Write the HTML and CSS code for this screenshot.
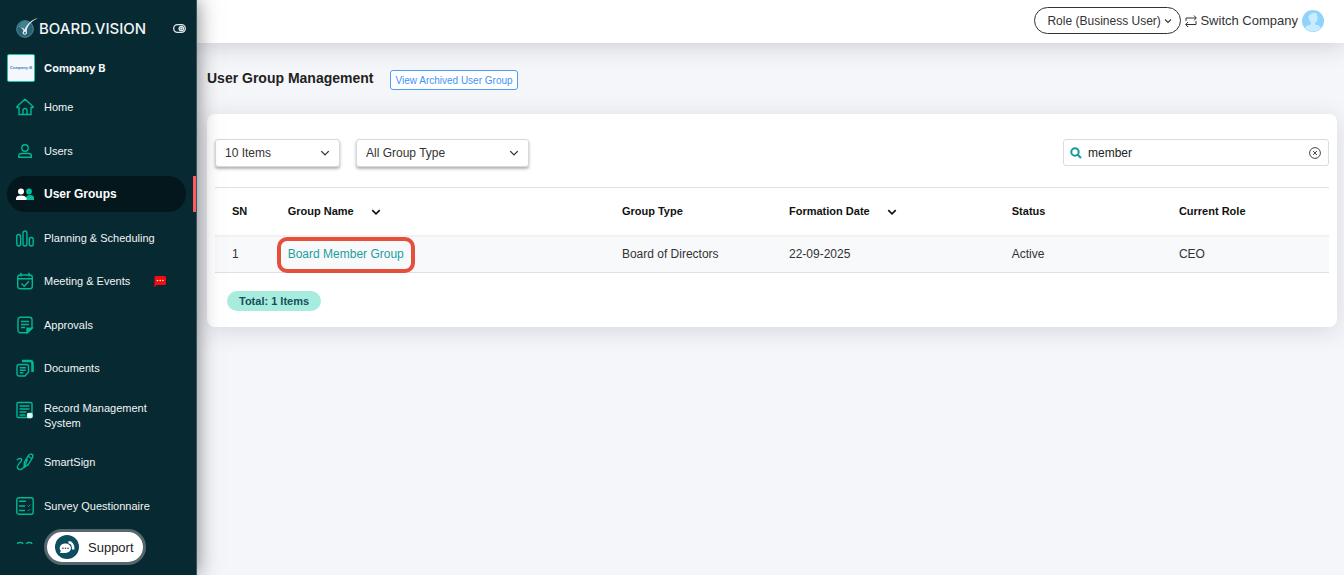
FILE: index.html
```html
<!DOCTYPE html>
<html lang="en">
<head>
    <meta charset="utf-8">
    <meta name="viewport" content="width=device-width, initial-scale=1">
    <title>User Group Management</title>
    <link rel="stylesheet" href="styles.css">
</head>
<body>
    <aside class="sidebar">
        <div class="brand">
            <svg class="brand-mark" viewBox="0 0 24 22" width="24" height="22">
                <circle cx="10" cy="12" r="8.300" fill="#286473" stroke="#4d8c98"/>
                <path d="M3 10a8 8 0 0 1 11-5L9 12z" fill="#4c8f9c" opacity=".7"/>
                <path d="M5.500 10.500q3 0 4 2C12 7 16 3 23 1c-6 3-9 6-11 11-.5 2 0 3 0 4a2.300 2.300 0 0 1-4.500 0c0-1 1-2 1-2.500q-1-2-3-3z" fill="#e6f0f1"/>
                <circle cx="9.800" cy="15.800" r="1" fill="#286473"/>
            </svg>
            <span class="brand-name">BOARD.VISION</span>
            <button class="toggle" aria-label="Collapse menu">
                <svg viewBox="0 0 13 9" width="13" height="9" fill="none" stroke="#e3e9ea" stroke-width="1.300">
                    <rect x=".7" y=".7" width="11.600" height="7.600" rx="3.800"/>
                    <circle cx="8.300" cy="4.500" r="2.200"/>
                    <circle cx="8.300" cy="4.500" r=".6"/>
                </svg>
            </button>
        </div>
        <div class="company">
            <span class="company-logo">Company B</span>
            <span class="company-name">Company B</span>
        </div>

        <nav class="nav">
            <a class="nav-item" href="#">
                <svg class="icon" viewBox="0 0 18 18"><path d="M1 8.500L9 1.200l8 7.300v1h-2v7H3v-7H1zM7 16.500v-4a2 2 0 0 1 4 0v4"/></svg>
                <span>Home</span>
            </a>
            <a class="nav-item" href="#">
                <svg class="icon" viewBox="0 0 18 18"><circle cx="9" cy="6" r="3.200"/><path d="M2.700 15.300v-1.300a2.500 2.500 0 0 1 2.500-2.500h7.600a2.500 2.500 0 0 1 2.500 2.500v1.300z"/></svg>
                <span>Users</span>
            </a>
            <a class="nav-item active" href="#">
                <svg class="icon" viewBox="0 0 18 18"><g stroke="none"><circle cx="13" cy="6.500" r="2.900" fill="#00c1a0"/><path d="M10 15v-2q0-3 4-3 4 0 4 3v2z" fill="#00c1a0"/><circle cx="5" cy="6.500" r="3" fill="#fff"/><path d="M0 15v-1.500q0-3 5-3t5.500 3V15z" fill="#fff"/></g></svg>
                <span>User Groups</span>
            </a>
            <a class="nav-item" href="#">
                <svg class="icon" viewBox="0 0 18 18"><rect x=".8" y="5.500" width="3.800" height="11.500" rx="1.900"/><rect x="7" y="2" width="3.900" height="15" rx="1.900"/><rect x="13.300" y="8.500" width="3.900" height="8.500" rx="1.900"/></svg>
                <span>Planning &amp; Scheduling</span>
            </a>
            <a class="nav-item" href="#">
                <svg class="icon" viewBox="0 0 18 18"><rect x="1.700" y="3" width="14.600" height="13.800" rx="2.500"/><path d="M2 6.800h14M5 .8v3.700M13 .8v3.700M5.500 11.500l2.700 2.700 4.800-5"/></svg>
                <span>Meeting &amp; Events</span>
                <svg class="alert" viewBox="0 0 12 11" width="12" height="11"><path d="M1.500 0h9q1.500 0 1.500 1.500v6Q12 9 10.500 9H3l-3 2 .5-3V1.500Q.5 0 1.500 0z" fill="#f00d0d"/><g fill="#fff"><circle cx="3.500" cy="4.500" r=".8"/><circle cx="6.200" cy="4.500" r=".8"/><circle cx="8.900" cy="4.500" r=".8"/></g></svg>
            </a>
            <a class="nav-item" href="#">
                <svg class="icon" viewBox="0 0 18 18"><path d="M4.500 1.300h9a2.500 2.500 0 0 1 2.500 2.500v8.500l-4.500 4.500h-7A2.500 2.500 0 0 1 2 14.300V3.800a2.500 2.500 0 0 1 2.500-2.500zM5 5.500h8M5 8.500h8M5 11.500h4"/><path d="M11 16.500v-4.300h5z" fill="#00b796"/></svg>
                <span>Approvals</span>
            </a>
            <a class="nav-item" href="#">
                <svg class="icon" viewBox="0 0 18 18"><path d="M3 5.500h7.500a2 2 0 0 1 2 2V13l-3.500 4H3a2 2 0 0 1-2-2V7.500a2 2 0 0 1 2-2zM3.800 8.700h6M3.800 11.200h6M3.800 13.700h3.500"/><path d="M6 2h8q2.500 0 2.500 2.500V13" stroke-width="2.600"/></svg>
                <span>Documents</span>
            </a>
            <a class="nav-item tall" href="#">
                <svg class="icon" viewBox="0 0 18 18"><rect x="1" y="1.500" width="15" height="15" rx="1"/><path d="M3.500 5h10M3.500 8h10M3.500 11h7M3.500 14h6"/><rect x="11.500" y="12.500" width="4.500" height="4" rx="1" fill="#fff" stroke="#b9fbe9"/></svg>
                <span>Record Management System</span>
            </a>
            <a class="nav-item" href="#">
                <svg class="icon" viewBox="0 0 18 18"><path d="M.8 7C3 5 6.500 5 5.500 7.500 4.500 10 .5 12 1.500 15c.7 2 3.500 2 5 .5 1-1 2-1.500 2.500-.5M8 14l.5-5 4-6.500q2-2.500 4-.5.8 1.500-.3 3.200L12 12zM12.500 3.500l3 2M11.500 6l-3 7.500M15 .8l2.300 1.500"/></svg>
                <span>SmartSign</span>
            </a>
            <a class="nav-item" href="#">
                <svg class="icon" viewBox="0 0 18 18"><rect x=".8" y=".8" width="16.400" height="16.400" rx="2"/><path d="M3 4.300h7M3 9h6M3 13.500h6"/><path d="M11.500 8.500l1 1 2-2M11.500 13l1 1 2-2" stroke-width=".8"/></svg>
                <span>Survey Questionnaire</span>
            </a>
            <a class="nav-item" href="#" aria-label="More">
                <svg class="icon" viewBox="0 0 18 18"><rect x="1.500" y="2.500" width="5.500" height="6" rx="2"/><rect x="10.500" y="2.500" width="5.500" height="6" rx="2"/></svg>
            </a>
        </nav>

        <button class="support">
            <svg viewBox="0 0 24 24" width="24" height="24">
                <circle cx="12" cy="12" r="12" fill="#0d4d60"/>
                <path d="M13.500 6q6 0 6 8.500h-2.500q0-6-3.500-6z" fill="#fff"/>
                <path d="M10.500 8.500a5.200 4.500 0 0 1 0 9.500H5l.8-2A5.200 4.700 0 0 1 10.500 8.500z" fill="#fff"/>
                <g fill="#0d4d60"><circle cx="8" cy="13.300" r=".8"/><circle cx="10.500" cy="13.300" r=".8"/><circle cx="13" cy="13.300" r=".8"/></g>
            </svg>
            Support
        </button>
    </aside>

    <div class="page">
        <header class="topbar">
            <div class="select-box role">
                <select aria-label="Role"><option>Role (Business User)</option></select>
                <svg class="chevron" viewBox="0 0 8 8" width="8" height="8"><path d="M1 2.500l3 3 3-3"/></svg>
            </div>
            <a class="switch" href="#">
                <svg viewBox="0 0 12 12" width="12" height="12" fill="none" stroke="#333" stroke-width="1"><path d="M1 6V3h10M9 .5L11.300 3 9 5.500M11 6v3.500H1M3 7L.7 9.500 3 12"/></svg>
                Switch Company
            </a>
            <svg class="avatar" viewBox="0 0 22 22" width="22" height="22">
                <circle cx="11" cy="11" r="11" fill="#8ed3fb"/>
                <path d="M3 18q1-3 6-3.500v-2Q6 10 6.500 7T11 3t4.500 4T13 12.500v2q5 .5 6 3.500a11 11 0 0 1-16 0z" fill="#c9ecff"/>
            </svg>
        </header>

        <main class="content">
            <div class="title-row">
                <h1>User Group Management</h1>
                <button class="archived">View Archived User Group</button>
            </div>

            <section class="card">
                <div class="filters">
                    <div class="select-box items">
                        <select aria-label="Items per page"><option>10 Items</option></select>
                        <svg class="chevron" viewBox="0 0 8 8" width="10" height="10"><path d="M1 2.500l3 3 3-3"/></svg>
                    </div>
                    <div class="select-box type">
                        <select aria-label="Group type"><option>All Group Type</option></select>
                        <svg class="chevron" viewBox="0 0 8 8" width="10" height="10"><path d="M1 2.500l3 3 3-3"/></svg>
                    </div>
                    <div class="search">
                        <svg viewBox="0 0 12 12" width="12" height="12" fill="none" stroke="#129a9c" stroke-width="2"><circle cx="5" cy="5" r="3.700"/><path d="M7.700 7.700l3.300 3.300"/></svg>
                        <input type="text" value="member" aria-label="Search">
                        <button class="clear" aria-label="Clear">
                            <svg viewBox="0 0 12 12" width="12" height="12" fill="none" stroke="#333" stroke-width=".9"><circle cx="6" cy="6" r="5.400"/><path d="M4 4l4 4M8 4L4 8"/></svg>
                        </button>
                    </div>
                </div>

                <table class="groups">
                    <thead>
                        <tr>
                            <th class="col-sn">SN</th>
                            <th class="col-name">Group Name <svg class="sort" viewBox="0 0 8 8" width="10" height="10"><path d="M1 2.500l3 3 3-3"/></svg></th>
                            <th class="col-type">Group Type</th>
                            <th class="col-date">Formation Date <svg class="sort" viewBox="0 0 8 8" width="10" height="10"><path d="M1 2.500l3 3 3-3"/></svg></th>
                            <th class="col-status">Status</th>
                            <th class="col-role">Current Role</th>
                        </tr>
                    </thead>
                    <tbody>
                        <tr>
                            <td>1</td>
                            <td><a class="group-link" href="#">Board Member Group</a></td>
                            <td>Board of Directors</td>
                            <td>22-09-2025</td>
                            <td>Active</td>
                            <td>CEO</td>
                        </tr>
                    </tbody>
                </table>

                <span class="total">Total: 1 Items</span>
            </section>
        </main>
    </div>
</body>
</html>
```
FILE: styles.css
```css
* {
    box-sizing: border-box;
}

body {
    margin: 0;
    display: flex;
    height: 100vh;
    font-family: "Liberation Sans", Arial, sans-serif;
    font-size: 12px;
    color: #333;
    background: #f5f6fa;
}

a {
    color: inherit;
    text-decoration: none;
}

button,
select,
input {
    font-family: inherit;
    cursor: pointer;
}

svg {
    flex: none;
}

/* Sidebar */
.sidebar {
    position: relative;
    z-index: 2;
    flex: 0 0 197px;
    display: flex;
    flex-direction: column;
    padding: 14px 0 31px;
    background: #072932;
    color: #f2f5f5;
    border-right: 1px solid #3a555c;
    box-shadow: 0 0 20px rgba(0, 0, 0, 0.5);
}

.brand {
    display: flex;
    align-items: center;
    height: 28px;
    padding: 0 10px 0 15px;
}

.brand-name {
    font-family: Inter, sans-serif;
    font-size: 15px;
    font-weight: 500;
}

.toggle {
    display: flex;
    margin-left: auto;
    padding: 0;
    border: 0;
    background: none;
}

.company {
    display: flex;
    align-items: center;
    gap: 9px;
    height: 28px;
    margin: 12px 0 3px;
    padding-left: 7px;
}

.company-logo {
    width: 28px;
    height: 28px;
    border: 1px solid #19c5a5;
    border-radius: 2px;
    background: #f4f7fc;
    color: #3c7fb8;
    font-size: 4px;
    font-style: italic;
    font-weight: bold;
    line-height: 26px;
    text-align: center;
}

.company-name {
    font-family: Inter, sans-serif;
    font-size: 11px;
    font-weight: bold;
}

.nav {
    flex: 1;
    min-height: 0;
    padding-top: 4px;
    overflow: hidden;
}

.nav-item {
    position: relative;
    display: flex;
    align-items: center;
    gap: 10px;
    height: 36px;
    margin: 0 10px 7px 7px;
    padding: 0 20px 0 9px;
    font-size: 11px;
    line-height: 15px;
    border-radius: 18px;
}

.nav-item:nth-child(odd) {
    margin-bottom: 8px;
}

.nav-item.active {
    background: #03171d;
    color: #fff;
    font-size: 12px;
    font-weight: bold;
}

/* Marker on the sidebar edge */
.nav-item.active::after {
    content: "";
    position: absolute;
    top: 0;
    right: -11px;
    width: 4px;
    height: 100%;
    background: #ff5a5f;
}

.nav-item.tall {
    height: 43px;
    padding-top: 7px;
    align-items: flex-start;
}

.icon {
    width: 18px;
    height: 18px;
    fill: none;
    stroke: #00b796;
    stroke-width: 1.4;
}

.alert {
    margin-left: auto;
}

.support {
    position: absolute;
    left: 44px;
    bottom: 10px;
    display: flex;
    align-items: center;
    gap: 9px;
    height: 36px;
    padding: 0 9px 0 8px;
    border: 3px solid #56676d;
    border-radius: 18px;
    background: #fff;
    color: #222;
    font-size: 13px;
}

/* Top bar */
.page {
    flex: 1;
    min-width: 0;
}

.topbar {
    display: flex;
    align-items: center;
    justify-content: flex-end;
    gap: 4px;
    height: 43px;
    padding: 0 20px 2px;
    background: #fff;
    box-shadow: 0 2px 24px rgba(30, 35, 60, 0.2);
}

.select-box {
    position: relative;
}

.select-box select {
    appearance: none;
    width: 100%;
    height: 28px;
    padding: 0 24px 0 9px;
    border: 1px solid #d6dade;
    border-radius: 3px;
    background: #fff;
    color: #333;
    font-size: 12px;
    box-shadow: 0 2px 3px rgba(0, 0, 0, 0.3);
}

.chevron {
    position: absolute;
    top: 9px;
    right: 10px;
    fill: none;
    stroke: #333;
    stroke-width: 1.1;
    pointer-events: none;
}

.role {
    width: 147px;
}

.role select {
    height: 27px;
    padding: 0 12px;
    border-color: #333;
    border-radius: 14px;
    box-shadow: none;
}

.role .chevron {
    top: 10px;
    right: 9px;
}

.switch {
    display: flex;
    align-items: center;
    gap: 3px;
    font-size: 13px;
}

/* Content */
.content {
    padding: 27px 7px 0 10px;
}

.title-row {
    display: flex;
    align-items: center;
    gap: 17px;
    height: 20px;
    margin-bottom: 24px;
}

h1 {
    margin: 0;
    padding-bottom: 4px;
    font-size: 14px;
    line-height: 16px;
    color: #222;
}

.archived {
    height: 20px;
    padding: 0 4px;
    border: 1px solid #4b9dfb;
    border-radius: 3px;
    background: #fff;
    color: #3f93f8;
    font-size: 10px;
}

.card {
    padding: 25px 8px 16px;
    border-radius: 8px;
    background: #fff;
    box-shadow: 0 4px 24px rgba(30, 35, 60, 0.14);
}

.filters {
    display: flex;
    gap: 16px;
    height: 28px;
    margin-bottom: 20px;
}

.items {
    width: 125px;
}

.type {
    width: 173px;
}

.search {
    display: flex;
    align-items: center;
    gap: 6px;
    width: 266px;
    height: 27px;
    margin-left: auto;
    padding: 0 7px 0 6px;
    border: 1px solid #d9dce0;
    border-radius: 3px;
}

.search input {
    flex: 1;
    min-width: 0;
    padding: 0;
    border: 0;
    outline: 0;
    color: #222;
    font-size: 12px;
}

.clear {
    display: flex;
    padding: 0;
    border: 0;
    background: none;
}

.groups {
    width: 100%;
    table-layout: fixed;
    border-collapse: collapse;
    border-top: 1px solid #dee0e2;
}

.groups th,
.groups td {
    padding: 0 0 0 17px;
    text-align: left;
}

.groups th {
    height: 48px;
    border-bottom: 2px solid #f0f1f2;
    color: #111;
    font-size: 11px;
}

.groups td {
    height: 37px;
    padding-bottom: 1px;
    border-bottom: 1px solid #dee0e2;
    background: #f8f9fb;
}

.sort {
    margin-left: 14px;
    vertical-align: middle;
    fill: none;
    stroke: #111;
    stroke-width: 1.3;
}

.col-sn {
    width: 5%;
}

.col-name {
    width: 30%;
}

.col-date {
    width: 20%;
}

.group-link {
    position: relative;
    color: #1a9f9f;
}

/* Highlight ring round the matching group */
.group-link::after {
    content: "";
    position: absolute;
    inset: -10px -11px -12px;
    border: 4px solid #e4503b;
    border-radius: 10px;
}

.total {
    display: inline-block;
    margin: 18px 0 0 12px;
    padding: 0 12px;
    border-radius: 10px;
    background: #a7ecdd;
    color: #164f5c;
    font-size: 11px;
    font-weight: bold;
    line-height: 20px;
}
```
